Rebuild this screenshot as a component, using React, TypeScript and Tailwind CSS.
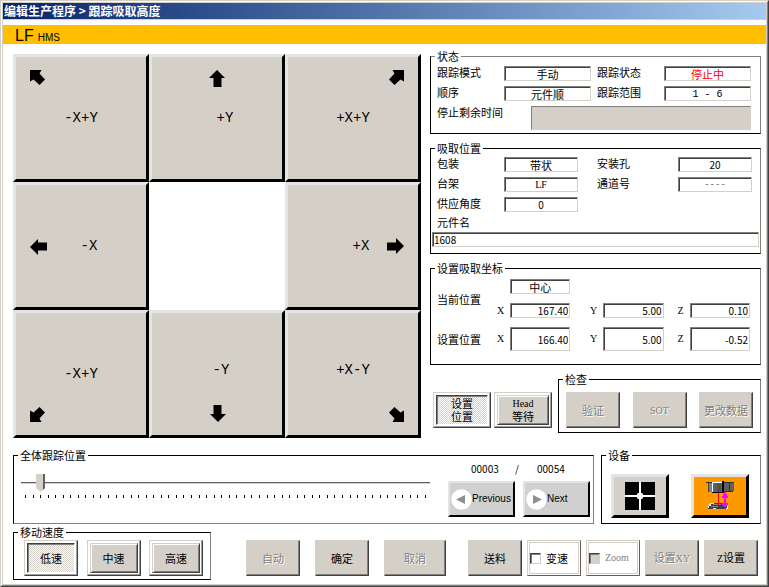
import { useState, type ReactNode } from 'react'
import clsx from 'clsx'

// ============================================================================
// Shared styles
// ============================================================================

const SERIF = "font-['Liberation_Serif','Noto_Sans_CJK_SC',serif]"
const MONO = "font-['Liberation_Mono','Noto_Sans_CJK_SC',monospace]"

const RAISED =
  'border border-t-[#d4d0c8] border-l-[#d4d0c8] border-r-[#404040] border-b-[#404040] bg-[#d4d0c8] shadow-[inset_-1px_-1px_0_#808080]'

const DITHER =
  'bg-[conic-gradient(#fff_25%,#d4d0c8_0_50%,#fff_0_75%,#d4d0c8_0)] bg-[size:2px_2px]'

const DISABLED_TEXT = 'text-[#808080] [text-shadow:1px_1px_0_#fff]'

// ============================================================================
// Building blocks
// ============================================================================

interface GroupProps {
  title: string
  className?: string
  children: ReactNode
}

function Group({ title, className, children }: GroupProps) {
  return (
    <fieldset className={clsx('min-w-0 border border-black border-r-[#808080]', className)}>
      <legend className="ml-1 h-3 px-[2px] leading-3">{title}</legend>
      {children}
    </fieldset>
  )
}

interface FieldProps {
  id: string
  value: string
  label?: string
  className?: string
}

function Field({ id, value, label, className }: FieldProps) {
  return (
    <input
      id={id}
      aria-label={label}
      readOnly
      value={value}
      className={clsx(
        'w-full min-w-0 border border-t-[#808080] border-l-[#808080] border-r-[#d4d0c8] border-b-[#d4d0c8] bg-white px-1 leading-3 shadow-[inset_1px_1px_0_#404040] outline-none',
        className,
      )}
    />
  )
}

interface PushButtonProps {
  children: ReactNode
  disabled?: boolean
}

function PushButton({ children, disabled }: PushButtonProps) {
  return (
    <button
      type="button"
      disabled={disabled}
      className={clsx('h-9 w-[54px] whitespace-nowrap', RAISED, disabled && DISABLED_TEXT)}
    >
      {children}
    </button>
  )
}

interface ToggleButtonProps {
  pressed: boolean
  onClick?: () => void
  className?: string
  children: ReactNode
}

/** Push button with a white inner frame; dithered and sunken while pressed. */
function ToggleButton({ pressed, onClick, className, children }: ToggleButtonProps) {
  return (
    <button
      type="button"
      aria-pressed={pressed}
      onClick={onClick}
      className={clsx(
        'flex h-9 border border-t-[#d4d0c8] border-l-[#d4d0c8] border-r-[#404040] border-b-[#404040] bg-white p-[2px] shadow-[inset_-1px_-1px_0_#a0a0a0]',
        className,
      )}
    >
      <span
        className={clsx(
          'flex h-full w-full flex-col items-center justify-center border text-center leading-[13px]',
          pressed
            ? 'border-t-[#404040] border-l-[#404040] border-r-white border-b-white shadow-[inset_1px_1px_0_#808080]'
            : 'border-t-[#d4d0c8] border-l-[#d4d0c8] border-r-[#404040] border-b-[#404040] bg-[#d4d0c8] shadow-[inset_1px_1px_0_#fff,inset_-1px_-1px_0_#808080]',
          pressed && DITHER,
        )}
      >
        {children}
      </span>
    </button>
  )
}

// ============================================================================
// Jog pad
// ============================================================================

interface JogButtonProps {
  label: string
  arrow: 'n' | 'ne' | 'e' | 'se' | 's' | 'sw' | 'w' | 'nw'
  arrowClass: string
  labelClass?: string
}

const STRAIGHT = 'M8 0 L16 8 H12.5 V17 H4.5 V8 H0 Z'
const DIAGONAL = 'M0 0 H11.5 L9.5 3.5 L15 9.5 L9.5 15 L3.5 9.5 L0 11.5 Z'

const ARROWS = {
  n: [STRAIGHT, 0],
  e: [STRAIGHT, 90],
  s: [STRAIGHT, 180],
  w: [STRAIGHT, 270],
  nw: [DIAGONAL, 0],
  ne: [DIAGONAL, 90],
  se: [DIAGONAL, 180],
  sw: [DIAGONAL, 270],
} as const

function JogButton({ label, arrow, arrowClass, labelClass }: JogButtonProps) {
  const [path, angle] = ARROWS[arrow]
  const size = path === STRAIGHT ? 17 : 15
  return (
    <button
      type="button"
      className="grid h-32 border-[3px] border-t-[#e4e4e4] border-l-[#e4e4e4] border-r-black border-b-black bg-[#d4d0c8] px-[14px] py-[13px]"
    >
      <svg
        viewBox={`0 0 ${size} ${size}`}
        className={clsx('[grid-area:1/1]', size === 17 ? 'size-[17px]' : 'size-[15px]', arrowClass)}
      >
        <path d={path} transform={`rotate(${angle} ${size / 2} ${size / 2})`} />
      </svg>
      <span
        className={clsx(
          "place-self-center font-['Liberation_Mono',monospace] text-[14px] leading-4 [grid-area:1/1]",
          labelClass,
        )}
      >
        {label}
      </span>
    </button>
  )
}

function JogPad() {
  return (
    <div className="mt-1 grid grid-cols-3 self-start">
      <JogButton label="-X+Y" arrow="nw" arrowClass="self-start justify-self-start" />
      <JogButton label="+Y" arrow="n" arrowClass="self-start justify-self-center" labelClass="pl-4" />
      <JogButton label="+X+Y" arrow="ne" arrowClass="self-start justify-self-end" />
      <JogButton label="-X" arrow="w" arrowClass="self-center justify-self-start" labelClass="pl-4" />
      <div />
      <JogButton label="+X" arrow="e" arrowClass="self-center justify-self-end" labelClass="pl-4" />
      <JogButton label="-X+Y" arrow="sw" arrowClass="self-end justify-self-start" />
      <JogButton label="-Y" arrow="s" arrowClass="self-end justify-self-center" labelClass="pl-2 pb-2" />
      <JogButton label="+X-Y" arrow="se" arrowClass="self-end justify-self-end" labelClass="pb-2" />
    </div>
  )
}

// ============================================================================
// Right-hand panels
// ============================================================================

function StatusPanel() {
  return (
    <Group title="状态" className="border-t-[#808080]">
      <div className="grid grid-cols-[67px_1fr_73px_1fr] gap-y-[5px] pt-1 pr-[9px] pb-[3px] pl-[6px]">
        <label htmlFor="mode" className="leading-3">跟踪模式</label>
        <Field id="mode" value="手动" className="h-[15px] text-center" />
        <label htmlFor="state" className="pl-[6px] leading-3">跟踪状态</label>
        <Field id="state" value="停止中" className="h-[15px] text-center text-[#f00]" />
        <label htmlFor="order" className="leading-3">顺序</label>
        <Field id="order" value="元件顺" className="h-[15px] text-center" />
        <label htmlFor="range" className="pl-[6px] leading-3">跟踪范围</label>
        <Field id="range" value="1 - 6" className={clsx('h-[15px] pt-[2px] text-center text-[10px]', MONO)} />
        <span className="whitespace-nowrap leading-3">停止剩余时间</span>
        <div
          role="progressbar"
          aria-label="停止剩余时间"
          className="col-span-3 ml-[27px] h-6 border border-t-[#808080] border-l-[#808080] border-r-[#d4d0c8] border-b-[#d4d0c8] bg-[#d4d0c8]"
        />
      </div>
    </Group>
  )
}

function PickupPanel() {
  return (
    <Group title="吸取位置">
      <div className="grid grid-cols-[67px_1fr_100px_1fr] gap-y-[5px] pt-[3px] pr-2 pl-[6px]">
        <label htmlFor="package" className="leading-3">包装</label>
        <Field id="package" value="带状" className="h-[15px] text-center" />
        <label htmlFor="hole" className="pl-[19px] leading-3">安装孔</label>
        <Field id="hole" value="20" className="h-[15px] text-center text-[10px]" />
        <label htmlFor="stage" className="leading-3">台架</label>
        <Field id="stage" value="LF" className={clsx('h-[15px] text-center text-[10px]', SERIF)} />
        <label htmlFor="channel" className="pl-[19px] leading-3">通道号</label>
        <Field id="channel" value="----" className={clsx('h-[15px] text-center text-[9px] text-[#606060]', MONO)} />
        <label htmlFor="angle" className="leading-3">供应角度</label>
        <Field id="angle" value="0" className="h-[15px] text-center text-[10px]" />
      </div>
      <div className="flex flex-col gap-1 px-px pt-1 pb-[6px]">
        <label htmlFor="part" className="pl-[5px] leading-3">元件名</label>
        <Field id="part" value="1608" className="h-[15px] px-px text-[10px]" />
      </div>
    </Group>
  )
}

const COORDS = [
  { name: '当前位置', height: 'h-[15px]', values: ['167.40', '5.00', '0.10'] },
  { name: '设置位置', height: 'h-6', values: ['166.40', '5.00', '-0.52'] },
]

function CoordinatePanel() {
  return (
    <Group title="设置吸取坐标">
      <div className="grid grid-cols-[60px_13px_1fr_33px_1fr_26px_1fr] items-center gap-y-[9px] pt-[5px] pr-[10px] pb-[13px] pl-[6px]">
        <span className="row-span-2">{COORDS[0].name}</span>
        <span />
        <Field id="anchor" label="基准" value="中心" className="h-[15px] text-center" />
        <span className="col-span-4" />
        {COORDS.map((row, r) => (
          <CoordinateRow key={row.name} row={row} showName={r > 0} />
        ))}
      </div>
    </Group>
  )
}

function CoordinateRow({ row, showName }: { row: (typeof COORDS)[number]; showName: boolean }) {
  return (
    <>
      {showName && <span>{row.name}</span>}
      {['X', 'Y', 'Z'].map((axis, i) => (
        <div key={axis} className="contents">
          <label
            htmlFor={`${row.name}-${axis}`}
            className={clsx('pr-[6px] text-right text-[10px] leading-3', SERIF)}
          >
            {axis}
          </label>
          <Field
            id={`${row.name}-${axis}`}
            value={row.values[i]}
            className={clsx('pr-px text-right text-[10px]', row.height)}
          />
        </div>
      ))}
    </>
  )
}

function CheckRow() {
  return (
    <div className="flex items-end gap-[6px]">
      <div className="mb-[5px] ml-[3px] flex gap-[3px]">
        <ToggleButton pressed className="w-[58px]">
          <span>设置</span>
          <span>位置</span>
        </ToggleButton>
        <ToggleButton pressed={false} className="w-[58px]">
          <span className={clsx('text-[10px]', SERIF)}>Head</span>
          <span>等待</span>
        </ToggleButton>
      </div>
      <Group title="检查" className="flex-1">
        <div className="flex justify-between px-[7px] pt-[7px] pb-1">
          <PushButton disabled>验证</PushButton>
          <PushButton disabled><span className={clsx('text-[10px]', SERIF)}>SOT</span></PushButton>
          <PushButton disabled>更改数据</PushButton>
        </div>
      </Group>
    </div>
  )
}

// ============================================================================
// Tracking slider
// ============================================================================

const TOTAL = 54

function pad(n: number) {
  return String(n).padStart(5, '0')
}

interface StepButtonProps {
  label: string
  points: string
  onClick: () => void
}

function StepButton({ label, points, onClick }: StepButtonProps) {
  return (
    <button
      type="button"
      onClick={onClick}
      className="flex h-9 w-[67px] items-center border-2 border-t-[#e4e4e4] border-l-[#e4e4e4] border-r-black border-b-black bg-[#d0d0d0] pl-px font-['Liberation_Sans',sans-serif] text-[10px]"
    >
      <svg viewBox="0 0 21 21" className="size-[21px] shrink-0">
        <circle cx="10.5" cy="10.5" r="10.3" fill="#fff" />
        <polygon points={points} fill="#909090" />
      </svg>
      {label}
    </button>
  )
}

function TrackingPanel() {
  const [index, setIndex] = useState(3)

  return (
    <Group title="全体跟踪位置" className="flex-1 border-b-[#808080]">
      <div className="flex gap-[18px] pt-px pr-[3px] pb-[5px] pl-[7px]">
        <div className="min-w-0 flex-1 pt-[11px]">
          <input
            type="range"
            aria-label="全体跟踪位置"
            min={1}
            max={TOTAL}
            value={index}
            onChange={e => setIndex(Number(e.target.value))}
            className="block h-5 w-full appearance-none bg-transparent [&::-webkit-slider-runnable-track]:h-[2px] [&::-webkit-slider-runnable-track]:border-b [&::-webkit-slider-runnable-track]:border-[#d4d0c8] [&::-webkit-slider-runnable-track]:bg-[#606060] [&::-webkit-slider-thumb]:-mt-2 [&::-webkit-slider-thumb]:h-[18px] [&::-webkit-slider-thumb]:w-[9px] [&::-webkit-slider-thumb]:appearance-none [&::-webkit-slider-thumb]:border-r-2 [&::-webkit-slider-thumb]:border-[#606060] [&::-webkit-slider-thumb]:bg-[#d4d0c8] [&::-webkit-slider-thumb]:[clip-path:polygon(0_0,100%_0,100%_78%,50%_100%,0_78%)]"
          />
          <div className="mt-[2px] flex justify-between px-1">
            {Array.from({ length: TOTAL }, (_, i) => (
              <span key={i} className="h-[3px] w-px bg-black" />
            ))}
          </div>
        </div>
        <div>
          <div className="flex h-[19px] items-center pb-[6px] text-[10px] leading-3">
            <output className="w-[67px] pl-[23px]">{pad(index)}</output>
            <span className="w-[22px]">/</span>
            <output>{pad(TOTAL)}</output>
          </div>
          <div className="flex gap-2">
            <StepButton
              label="Previous"
              points="5,10.5 14,6 14,15"
              onClick={() => setIndex(i => Math.max(1, i - 1))}
            />
            <StepButton
              label="Next"
              points="16,10.5 7,6 7,15"
              onClick={() => setIndex(i => Math.min(TOTAL, i + 1))}
            />
          </div>
        </div>
      </div>
    </Group>
  )
}

// ============================================================================
// Devices
// ============================================================================

const DEVICE_BUTTON =
  'flex h-11 w-[58px] items-center justify-center border-[3px] border-t-[#e4e4e4] border-l-[#e4e4e4] border-r-black border-b-black'

function DevicePanel() {
  return (
    <Group title="设备" className="w-[160px]">
      <div className="flex gap-[22px] pt-[13px] pb-[5px] pl-[9px]">
        <button type="button" aria-label="相机" className={clsx(DEVICE_BUTTON, 'bg-[#d4d0c8]')}>
          <svg viewBox="0 0 30 28" className="h-7 w-[30px]">
            <rect width="30" height="28" />
            <path d="M14 0h2v28h-2zM0 13h30v2H0z" fill="#fff" />
            <path d="M13 11h4l1 1v4l-1 1h-4l-1-1v-4z" fill="#fff" />
          </svg>
        </button>
        <button type="button" aria-label="吸嘴" className={clsx(DEVICE_BUTTON, 'bg-[#ff9900]')}>
          <svg viewBox="0 0 30 30" className="size-[30px]" shapeRendering="crispEdges">
            <path d="M1 1h7v1H1z" fill="#303030" />
            <path d="M3 2h4v9H3z" fill="#808080" />
            <path d="M3 2h1v9H3z" fill="#404040" />
            <path d="M7 1h11v11H7z" fill="#606060" />
            <path d="M7 1h10v1H8v9H7z" fill="#fff" />
            <path d="M12 2h4v9h-4z" fill="#505050" />
            <path d="M17 0h2v12h-2zM7 11h11v1H7z" fill="#000" />
            <path d="M19 1h10v9H19z" fill="#606060" />
            <path d="M19 1h10v1H19zM24 2h1v8h-1zM19 10h9v1h-9z" fill="#303030" />
            <path d="M7 22h13l3 4v2H3v-2z" fill="#404040" />
            <path d="M5 22h4v1H6v2H4v2H3v-2h1v-2h1zM8 27h3v1H8zM22 25h1v3h-2v-1h1z" fill="#e8e8e8" />
            <path d="M8 23h8v1H8zM6 25h7v1H6z" fill="#808080" />
            <path d="M13 12h1v12h-1z" fill="#f00" />
            <path d="M19 11h2v2h1v2h1v2h-2v5h2v2h-1v1h-1v1h-2v-1h-1v-1h-1v-2h2v-5h-2v-2h1v-2h1z" fill="#f0f" />
          </svg>
        </button>
      </div>
    </Group>
  )
}

// ============================================================================
// Bottom bar
// ============================================================================

const SPEEDS = ['低速', '中速', '高速']

function CheckButton({ label, disabled }: { label: string; disabled?: boolean }) {
  return (
    <label
      className={clsx(
        'flex h-9 w-[54px] items-center gap-[5px] border border-t-[#d4d0c8] border-l-[#d4d0c8] border-r-[#606060] border-b-[#606060] bg-white pl-[2px] shadow-[inset_0_0_0_1px_#fff,inset_0_0_0_2px_#d4d0c8]',
        disabled && 'text-[#808080]',
      )}
    >
      <input
        type="checkbox"
        disabled={disabled}
        className={clsx(
          'size-[11px] shrink-0 appearance-none border border-t-[#404040] border-l-[#404040] border-r-[#d4d0c8] border-b-[#d4d0c8] shadow-[inset_1px_1px_0_#808080] checked:bg-[#404040]',
          disabled ? 'bg-[#d4d0c8]' : 'bg-white',
        )}
      />
      <span className={disabled ? clsx('text-[10px]', SERIF) : undefined}>{label}</span>
    </label>
  )
}

function BottomBar() {
  const [speed, setSpeed] = useState('低速')

  return (
    <div className="mt-[2px] flex items-end">
      <Group title="移动速度" className="w-[198px]">
        <div className="flex justify-between pt-[2px] pr-[7px] pb-[3px] pl-[10px]">
          {SPEEDS.map(name => (
            <ToggleButton
              key={name}
              pressed={speed === name}
              onClick={() => setSpeed(name)}
              className="w-[54px]"
            >
              {name}
            </ToggleButton>
          ))}
        </div>
      </Group>
      <div className="mb-1 ml-[35px] flex gap-[15px]">
        <PushButton disabled>自动</PushButton>
        <PushButton>确定</PushButton>
        <button type="button" disabled className={clsx('h-9 w-[62px]', RAISED, DISABLED_TEXT)}>
          取消
        </button>
      </div>
      <div className="mr-[3px] mb-1 ml-auto flex gap-[5px]">
        <PushButton>送料</PushButton>
        <CheckButton label="变速" />
        <CheckButton label="Zoom" disabled />
        <PushButton disabled>设置<span className={clsx('text-[10px]', SERIF)}>XY</span></PushButton>
        <PushButton><span className={clsx('text-[10px]', SERIF)}>Z</span>设置</PushButton>
      </div>
    </div>
  )
}

// ============================================================================
// App
// ============================================================================

export default function App() {
  return (
    <div className="border border-t-[#d4d0c8] border-l-[#d4d0c8] border-r-[#404040] border-b-[#404040] bg-white font-['Noto_Sans_CJK_SC',sans-serif] text-[11px] leading-3 text-black">
      <div className="border border-t-white border-l-white border-r-[#808080] border-b-[#808080]">
        <div className="border border-[#d4d0c8]">
          <h1 className="h-4 bg-linear-to-r from-[#0a246a] to-[#a6caf0] pl-px text-[12px] leading-4 font-bold text-white">
            编辑生产程序 &gt; 跟踪吸取高度
          </h1>
          <div className="border-t border-[#d4d0c8] bg-white pt-[5px]">
            <div className="flex h-[19px] items-baseline gap-1 bg-[#ffbf00] pl-3 font-['Liberation_Sans',sans-serif] leading-[22px]">
              <span className="text-[16px]">LF</span>
              <span className="text-[10px]">HMS</span>
            </div>
          </div>
          <main className="pt-[6px] pr-[5px] pb-1 pl-[10px]">
            <div className="grid grid-cols-[408fr_331fr] gap-[9px]">
              <JogPad />
              <div className="flex flex-col gap-2">
                <StatusPanel />
                <PickupPanel />
                <CoordinatePanel />
                <CheckRow />
              </div>
            </div>
            <div className="mt-[11px] flex gap-[7px]">
              <TrackingPanel />
              <DevicePanel />
            </div>
            <BottomBar />
          </main>
        </div>
      </div>
    </div>
  )
}
